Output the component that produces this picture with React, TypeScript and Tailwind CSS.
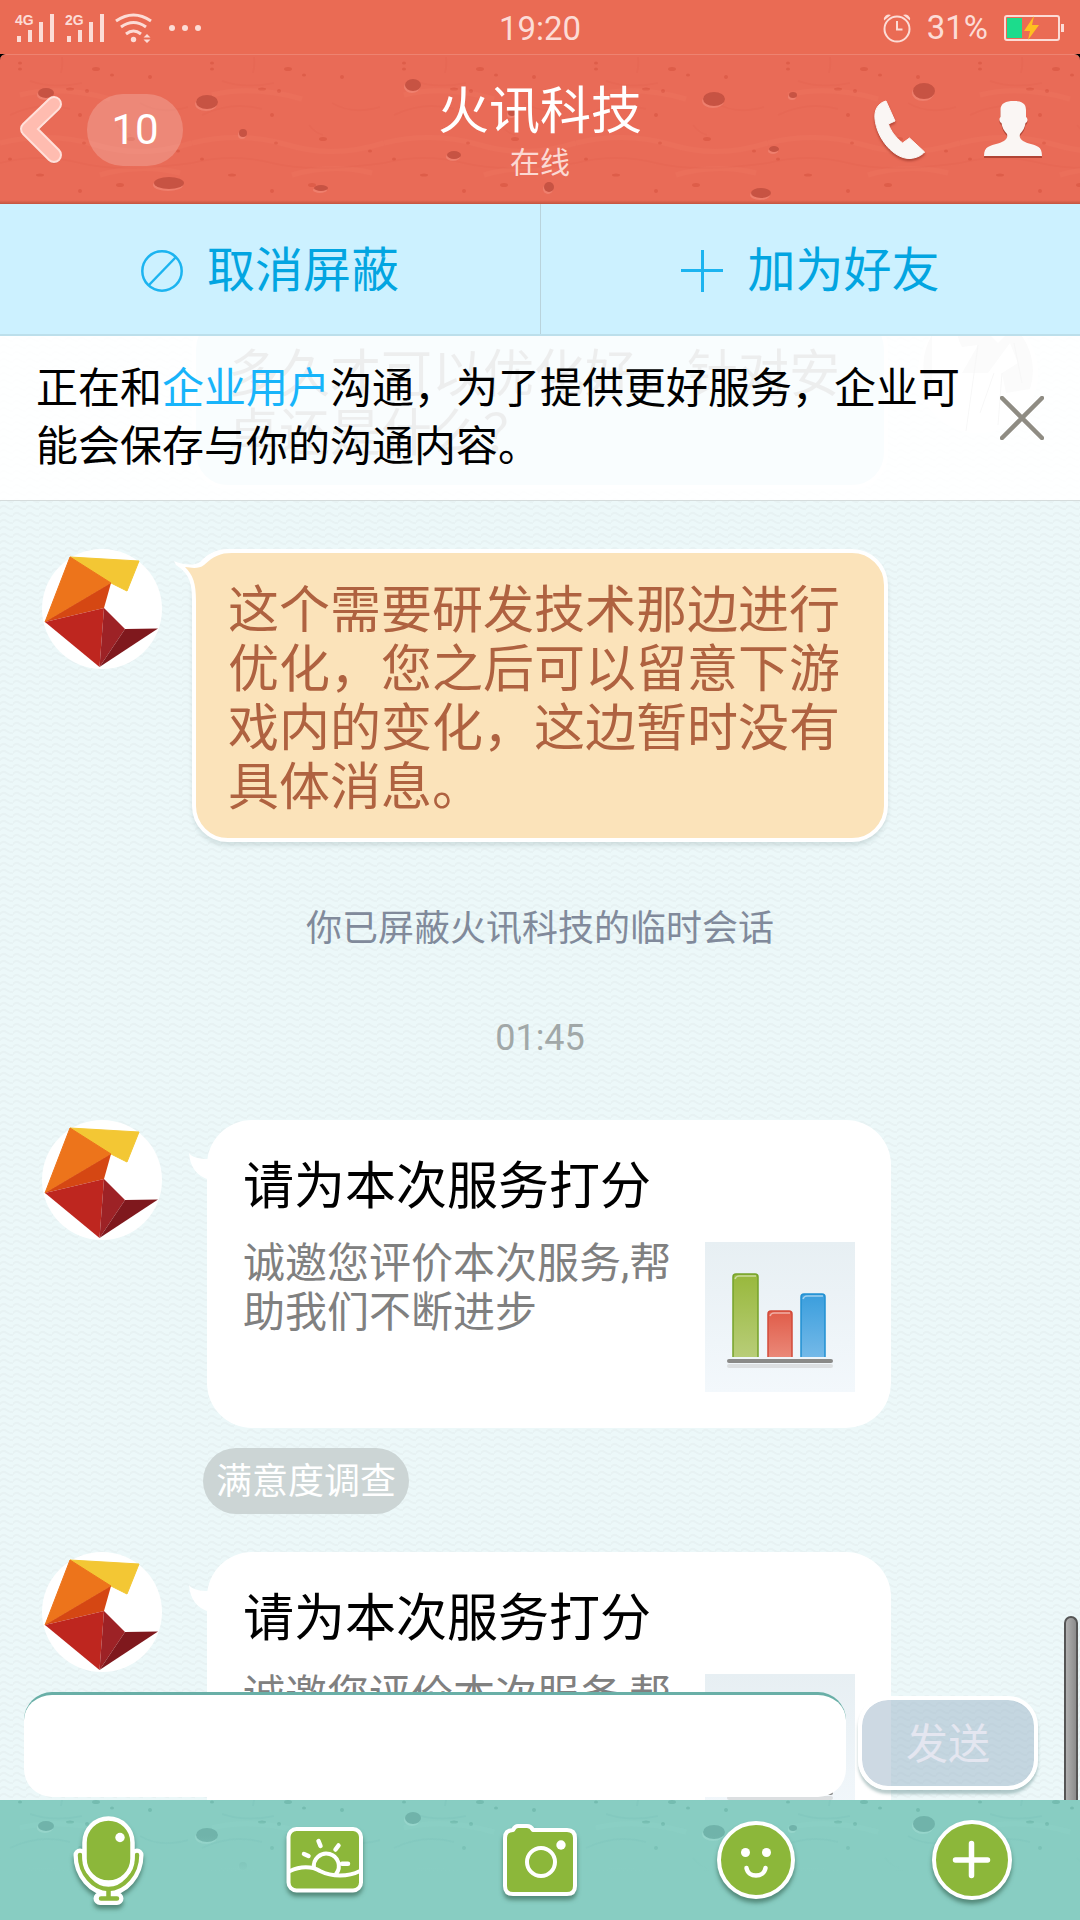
import { useId } from 'react';

const cracks = [
  [20, 14], [96, 14], [112, 20], [87, 36], [70, 34], [80, 60], [20, 8], [131, 84], [84, 88], [150, 22], [40, 120], [80, 136], [178, 96], [120, 130], [10, 104],
];

const spots = [
  { x: 46, y: 38, rx: 8, ry: 5 },
  { x: 207, y: 47, rx: 11, ry: 7 },
  { x: 243, y: 78, rx: 4, ry: 4 },
  { x: 169, y: 128, rx: 15, ry: 6 },
  { x: 413, y: 30, rx: 8, ry: 6 },
  { x: 454, y: 100, rx: 7, ry: 4 },
  { x: 321, y: 133, rx: 7, ry: 3 },
  { x: 512, y: 58, rx: 4, ry: 3 },
  { x: 549, y: 132, rx: 5, ry: 5 },
  { x: 714, y: 44, rx: 11, ry: 7 },
  { x: 793, y: 40, rx: 4, ry: 3 },
  { x: 774, y: 94, rx: 5, ry: 3 },
  { x: 761, y: 138, rx: 10, ry: 5 },
  { x: 924, y: 36, rx: 11, ry: 8 },
];

function Texture({ viewBox, spot, speck, glow }: { viewBox: string; spot: string; speck: string; glow: string }) {
  const id = useId();
  return (
    <svg viewBox={viewBox} preserveAspectRatio="xMidYMin slice" className="absolute inset-0 w-full h-full" aria-hidden="true">
      <defs>
        <pattern id={id} width="192" height="150" patternUnits="userSpaceOnUse">
          {cracks.map(([x, y], i) => (
            <ellipse key={i} cx={x} cy={y} rx={i % 3 === 1 ? 4 : 2} ry={i % 2 ? 2 : 1.5} fill={speck} opacity="0.35" />
          ))}
          <path d="M62 2q1 8-1 16M117 70q6 8 14 10M0 108q40-10 80 0t112 0M140 48q20 12 48 4M10 60q30-14 60-6M30 26q24 8 52 2" fill="none" stroke={speck} strokeWidth="2" opacity="0.08" />
          <path d="M0 88q50-12 96 2t96-2M20 40q40-10 90 4M100 120q40-12 80-2" fill="none" stroke={glow} strokeWidth="5" opacity="0.08" />
        </pattern>
      </defs>
      <rect width="1080" height="150" fill={`url(#${id})`} />
      {spots.map(({ x, y, rx, ry }) => (
        <g key={`${x}-${y}`}>
          <ellipse cx={x - 1} cy={y + 2} rx={rx} ry={ry} fill={glow} opacity="0.5" />
          <ellipse cx={x} cy={y} rx={rx} ry={ry} fill={spot} />
        </g>
      ))}
    </svg>
  );
}

function Weave() {
  return (
    <svg className="absolute inset-0 w-full h-full" aria-hidden="true">
      <defs>
        <pattern id="weave" width="13" height="7" patternUnits="userSpaceOnUse">
          <path d="M-1 5Q3 0 6.500 3T14 5" fill="none" stroke="#e7f2f3" strokeWidth="2" />
        </pattern>
      </defs>
      <rect width="100%" height="100%" fill="url(#weave)" />
    </svg>
  );
}

function StatusBar() {
  return (
    <div className="grid grid-cols-3 items-center h-[54px] bg-[#ea6b54] text-[#fcdcd6] text-[33px] leading-[54px]">
      <svg width="210" height="54" viewBox="0 0 210 54" fill="currentColor" role="img" aria-label="4G 2G Wi-Fi">
        <text x="15" y="24" fontSize="14" fontWeight="700" fontFamily="Liberation Sans, sans-serif">4G</text>
        <path d="M17 35h4v6h-4zM28 29h4v12h-4zM39 21h4v20h-4zM50 13h4v28h-4z" />
        <text x="65" y="24" fontSize="14" fontWeight="700" fontFamily="Liberation Sans, sans-serif">2G</text>
        <path d="M67 35h4v6h-4zM78 29h4v12h-4zM89 21h4v20h-4zM100 13h4v28h-4z" />
        <path d="M116 20q17.500-12 35 0M121 26q12.500-9 25 0M126 33q7.500-6 15 0" fill="none" stroke="currentColor" strokeWidth="3" />
        <circle cx="133.500" cy="38.500" r="2.700" />
        <path d="M143.500 36.500l3.500-3.500 3.500 3.500zM143.500 38.500l3.500 3.500 3.500-3.500z" />
        <circle cx="172" cy="27" r="3" />
        <circle cx="185" cy="27" r="3" />
        <circle cx="198" cy="27" r="3" />
      </svg>
      <time className="text-center pt-0.5">19:20</time>
      <div className="flex items-center justify-end gap-4 pr-[15px]">
        <svg width="28" height="30" viewBox="0 0 28 30" fill="none" stroke="currentColor" strokeWidth="2" aria-hidden="true">
          <circle cx="14" cy="16" r="12.500" />
          <path d="M14 8v8.500h5.500" />
          <path d="M1 7.500a5 5 0 0 1 7-5.500zM27 7.500a5 5 0 0 0-7-5.500z" fill="currentColor" stroke="none" />
        </svg>
        <span>31%</span>
        <svg width="61" height="28" viewBox="0 0 61 28" role="img" aria-label="31%">
          <rect x="1" y="2" width="54" height="24" rx="2" fill="none" stroke="currentColor" strokeWidth="2" />
          <rect x="3" y="4" width="15" height="20" fill="#1cdc8c" />
          <path d="M57 10h3v8h-3z" fill="currentColor" />
          <path d="M30 2L20 17h6l-2 9 11-15h-7z" fill="#ffc020" />
        </svg>
      </div>
    </div>
  );
}

function Header() {
  return (
    <div className="bg-black">
      <header className="relative grid grid-cols-[1fr_auto_1fr] items-center h-[150px] rounded-t-md overflow-hidden bg-[#e96b57] border-t border-[#ee8371]">
        <Texture viewBox="0 0 1080 150" spot="#c75343" speck="#c8432f" glow="#f59483" />
        <div className="absolute inset-x-0 bottom-0 h-1 bg-linear-to-b from-transparent to-[#c2543f]" />
        <div className="relative flex items-center gap-5 pl-3">
          <button type="button" aria-label="返回">
            <svg width="55" height="80" viewBox="0 0 55 80" fill="none" strokeLinecap="round" strokeLinejoin="round">
              <path d="M42 15L16 40l26 26" stroke="#b04a3c" strokeWidth="15" opacity="0.4" />
              <path d="M42 14L16 39l26 26" stroke="#ffe0da" strokeWidth="16" />
              <path d="M42 14L16 39l26 26" stroke="#ffbcb0" strokeWidth="12" />
            </svg>
          </button>
          <span className="flex items-center justify-center w-24 h-[72px] rounded-full bg-white/20 text-[42px] text-white">10</span>
        </div>
        <div className="relative text-center pt-1.5">
          <h1 className="text-[51px] leading-[60px] text-white">火讯科技</h1>
          <p className="text-[30px] leading-[42px] text-[#fbd9d3]">在线</p>
        </div>
        <div className="relative flex items-center justify-end gap-12 pr-8">
          <button type="button" aria-label="语音通话">
            <svg width="60" height="72" viewBox="0 0 60 72" className="drop-shadow-[0_2px_1px_rgba(120,30,20,0.5)]">
              <path d="M16 7C8 9 4 16 5 25C7 45 24 65 40 64.500C47 64 52 61 54.600 58L39.500 44L32.600 49C26 44 20 36 18.500 30L25 27Z" fill="#faf6f4" stroke="#faf6f4" strokeLinejoin="round" />
            </svg>
          </button>
          <button type="button" aria-label="联系人资料">
            <svg width="70" height="72" viewBox="0 0 70 72" className="drop-shadow-[0_2px_0_rgba(120,30,20,0.5)]">
              <path d="M6 62C6 52 12 52 20 49.500C28 47 30 44 29 40C26 37 24 33 23.500 29C21 28 21 24 22.500 23V16C22.500 9 28 7 35.500 7S48 9 48 16V23C50 24 50 28 47.500 29C47 33 45 37 42 40C41 44 43 47 51 49.500C59 52 64 52 64 62Z" fill="#faf6f4" />
            </svg>
          </button>
        </div>
      </header>
    </div>
  );
}

function Actions() {
  return (
    <div className="grid grid-cols-2 h-[132px] bg-[#ccf1ff] border-b-2 border-[#bcdfeb] text-[48px] text-[#02a5e1]">
      <button type="button" className="flex items-center justify-center gap-6 pt-1">
        <svg width="42" height="42" viewBox="0 0 42 42" fill="none" stroke="#1cb4f0" strokeWidth="2.500" aria-hidden="true">
          <circle cx="21" cy="21" r="19.700" />
          <path d="M8 35L35 7" />
        </svg>
        取消屏蔽
      </button>
      <button type="button" className="flex items-center justify-center gap-6 pt-1 border-l border-[#b9d3dc]">
        <svg width="42" height="42" viewBox="0 0 42 42" stroke="#1cb4f0" strokeWidth="3" aria-hidden="true">
          <path d="M0 20.500h42M21.500 0v42" />
        </svg>
        加为好友
      </button>
    </div>
  );
}

function Notice() {
  return (
    <div className="absolute inset-x-0 top-0 z-10 flex items-center justify-between px-9 py-6 bg-white/92 border-b border-[#d5dcdc]">
      <p className="w-[936px] text-[42px] leading-[58px] text-black">
        正在和<a href="#enterprise" className="text-[#18b4fa]">企业用户</a>沟通，为了提供更好服务，企业可能会保存与你的沟通内容。
      </p>
      <button type="button" aria-label="关闭" className="shrink-0">
        <svg width="44" height="44" viewBox="0 0 44 44" fill="none" stroke="#8f8c83" strokeWidth="4.500" strokeLinecap="round">
          <path d="M2 2l40 40M42 2L2 42" />
        </svg>
      </button>
    </div>
  );
}

function Avatar() {
  return (
    <svg viewBox="0 0 120 120" className="w-[120px] h-[120px] shrink-0" role="img" aria-label="火讯科技">
      <circle cx="60" cy="60" r="60" fill="#fff" />
      <path d="M28 8L97 12L85 42L69 34Z" fill="#f3c734" stroke="#f3c734" strokeLinejoin="round" />
      <path d="M28 8L69 34L3 73Z" fill="#ed741b" stroke="#ed741b" strokeLinejoin="round" />
      <path d="M69 34L3 73L62 59Z" fill="#d54713" />
      <path d="M3 73L62 59L57.500 118Z" fill="#be261f" />
      <path d="M62 59L83 80L57.500 118Z" fill="#9d2226" />
      <path d="M83 80L116 79.500L57.500 118Z" fill="#7f181d" />
    </svg>
  );
}

function SurveyChart() {
  return (
    <svg viewBox="0 0 150 150" className="w-[150px] h-[150px] shrink-0" role="img" aria-label="满意度调查">
      <defs>
        <linearGradient id="tile" x2="0" y2="1"><stop stopColor="#e7eff3" /><stop offset="1" stopColor="#f3f8fc" /></linearGradient>
        <linearGradient id="green" x2="0" y2="1"><stop stopColor="#98b83c" /><stop offset="1" stopColor="#b8cd78" /></linearGradient>
        <linearGradient id="red" x2="0" y2="1"><stop stopColor="#e05c49" /><stop offset="1" stopColor="#ea8878" /></linearGradient>
        <linearGradient id="blue" x2="0" y2="1"><stop stopColor="#3a9edd" /><stop offset="1" stopColor="#74b9e8" /></linearGradient>
      </defs>
      <rect width="150" height="150" fill="url(#tile)" />
      <path d="M28 115V35q0-3 3-3h19q3 0 3 3v80" fill="url(#green)" stroke="#76a22a" strokeWidth="1.500" />
      <path d="M63 115V72q0-3 3-3h18q3 0 3 3v43" fill="url(#red)" stroke="#d24b3a" strokeWidth="1.500" />
      <path d="M96 115V55q0-3 3-3h18q3 0 3 3v60" fill="url(#blue)" stroke="#2190d2" strokeWidth="1.500" />
      <path d="M30 37q1-3 4-3h17M65 74q1-3 4-3h16M98 57q1-3 4-3h16" fill="none" stroke="#fff" strokeWidth="1.500" opacity="0.5" />
      <rect x="22" y="117" width="106" height="4" rx="2" fill="#8a8a88" />
      <rect x="22" y="122" width="106" height="4" rx="2" fill="#dcdfe1" />
    </svg>
  );
}

function SurveyCard() {
  return (
    <div className="relative flex-1 max-w-[684px] ml-[45px] px-9 h-[308px] rounded-[45px] bg-white">
      <svg width="22" height="30" viewBox="0 0 22 30" className="absolute -left-[19px] top-8" aria-hidden="true">
        <path d="M1 1C4 5 10 7 22 7V28C8 24 2 14 1 1Z" fill="#fff" />
      </svg>
      <h2 className="pt-[37px] text-[51px] leading-[60px] text-black">请为本次服务打分</h2>
      <div className="flex justify-between gap-3 pt-[25px]">
        <p className="-mt-[3px] text-[42px] leading-[49px] text-[#808080]">诚邀您评价本次服务,帮助我们不断进步</p>
        <SurveyChart />
      </div>
    </div>
  );
}

function Messages() {
  return (
    <ol className="relative -mt-[23px]">
      <li className="flex items-start justify-end mb-15 pr-[42px]">
        <div className="w-[696px] mr-[30px] px-8 pt-7 pb-[22px] rounded-[36px] border-4 border-white bg-[#b4dcea] text-[51px] leading-[59px] text-[#1b2a30]">
          多久才可以优化好，针对安卓还是什么？
        </div>
        <svg viewBox="0 0 120 120" className="w-[120px] h-[120px]" role="img" aria-label="我">
          <circle cx="60" cy="60" r="60" fill="#fff" />
          <path d="M14 22A60 60 0 0 0 14 84V22ZM40 2Q36 20 44 34L60 32 44 60H70L92 30 100 50 84 60 88 80 112 76A60 60 0 0 0 96 14L80 30 60 10Z" fill="#c4c4c4" />
          <path d="M60 32L48 118M76 60L62 100M84 60L80 112M96 30L104 70" fill="none" stroke="#999" />
        </svg>
      </li>
      <li className="flex items-start mb-15 pl-[42px]">
        <Avatar />
        <div className="relative w-[696px] ml-[30px] px-8 pt-7 pb-[21px] rounded-[36px] border-4 border-white bg-[#fbe3ba] shadow-[0_4px_4px_rgba(60,90,90,0.14)] text-[51px] leading-[59px] text-[#af6240]">
          <svg width="62" height="54" viewBox="0 0 62 54" className="absolute -left-6 -top-1" aria-hidden="true">
            <path d="M2 12C10 16 22 17 28 13C38 4 44 0 60 0V10L30 50H20C20 32 16 24 4 16Z" fill="#fff" />
            <path d="M13 18C20 19 27 20 32 16C42 7 48 4 60 4V52H24C24 34 21 26 13 18Z" fill="#fbe3ba" />
          </svg>
          <p className="relative">这个需要研发技术那边进行优化，您之后可以留意下游戏内的变化，这边暂时没有具体消息。</p>
        </div>
      </li>
      <li className="mb-15 text-center text-[36px] leading-[54px] text-[#818a9b]">你已屏蔽火讯科技的临时会话</li>
      <li className="mb-15 text-center text-[36px] leading-[44px] text-[#a1a8a8]"><time>01:45</time></li>
      <li className="mb-[38px]">
        <div className="flex items-start pl-[42px]">
          <Avatar />
          <SurveyCard />
        </div>
        <a href="#survey" className="flex items-center w-fit h-[66px] mt-5 ml-[203px] px-[13px] pt-0.5 rounded-full bg-[#ccd5d5] text-[36px] text-white">满意度调查</a>
      </li>
      <li className="flex items-start pl-[42px]">
        <Avatar />
        <SurveyCard />
      </li>
    </ol>
  );
}

function Composer() {
  return (
    <form className="absolute inset-x-0 bottom-0 z-10 flex items-start gap-3 pl-6 pr-[42px] pb-[3px]" onSubmit={(e) => e.preventDefault()}>
      <input type="text" aria-label="输入消息" className="flex-1 min-w-0 h-[105px] px-6 rounded-[28px] border-t-3 border-[#69afa7] bg-white text-[42px] outline-none" />
      <button type="submit" className="w-[180px] h-[94px] mt-1 pt-0.5 rounded-[30px] border-4 border-white bg-[#9bb3c8]/50 bg-clip-padding shadow-[0_4px_3px_rgba(60,110,110,0.35)] text-[42px] text-[#e4e6f0]">发送</button>
    </form>
  );
}

const tools = [
  {
    label: '语音',
    icon: (
      <>
        <path d="M26 55C26 74 40 89 54.500 89S83 74 83 55M54.500 89v9M46 98.500h17" stroke="#fff" strokeWidth="13" />
        <path d="M26 55C26 74 40 89 54.500 89S83 74 83 55M54.500 89v9M47 98.500h16" stroke="#8cb73a" strokeWidth="4.500" />
        <rect x="30.500" y="18.500" width="48" height="64" rx="24" fill="#8cb73a" stroke="#fff" strokeWidth="4.500" />
        <circle cx="66" cy="37.500" r="4.700" fill="#fff" />
      </>
    ),
  },
  {
    label: '图片',
    icon: (
      <>
        <rect x="18.500" y="29" width="72.500" height="61.500" rx="8" fill="#8cb73a" stroke="#fff" strokeWidth="4" />
        <path d="M20 71C30 66 42 66 50 71C62 77 78 77 90 71M44 68A12.500 12.500 0 1 1 66 74" stroke="#fff" strokeWidth="4" />
        <path d="M48.500 41l2 5M68.500 45.500l-3 4M34 54l4.500 2M72 63.700h6" stroke="#fff" strokeWidth="4.500" />
      </>
    ),
  },
  {
    label: '拍照',
    icon: (
      <>
        <path d="M27 30q2-4 5-4h9q4 0 6 4h34q8 0 8 8v48q0 8-8 8H27q-8 0-8-8V38q0-8 8-8z" fill="#8cb73a" stroke="#fff" strokeWidth="4" />
        <circle cx="55" cy="62" r="14" stroke="#fff" strokeWidth="4" />
        <circle cx="75" cy="45" r="4.700" fill="#fff" />
      </>
    ),
  },
  {
    label: '表情',
    icon: (
      <>
        <circle cx="54" cy="60" r="37" fill="#8cb73a" stroke="#fff" strokeWidth="4" />
        <circle cx="43.500" cy="52.500" r="4.500" fill="#fff" />
        <circle cx="64.500" cy="52.500" r="4.500" fill="#fff" />
        <path d="M44.500 68C46 78 62 78 63.500 68" stroke="#fff" strokeWidth="4.500" />
      </>
    ),
  },
  {
    label: '更多',
    icon: (
      <>
        <circle cx="54" cy="60" r="38" fill="#8cb73a" stroke="#fff" strokeWidth="4" />
        <path d="M37.500 60h32M53.500 43.500v32" stroke="#fff" strokeWidth="5.500" />
      </>
    ),
  },
];

function Toolbar() {
  return (
    <nav className="relative grid grid-cols-5 h-[120px] overflow-hidden bg-[#88cdc2]">
      <Texture viewBox="0 12 1080 120" spot="#70b3aa" speck="#4f9c90" glow="#a4ddd4" />
      <div className="absolute inset-0 bg-linear-to-b from-[#88cdc2]/0 from-30% to-[#88cdc2] to-60%" />
      {tools.map(({ label, icon }) => (
        <button key={label} type="button" aria-label={label} className="relative flex justify-center">
          <svg width="108" height="120" viewBox="0 0 108 120" fill="none" strokeLinecap="round" strokeLinejoin="round" className="drop-shadow-[0_4px_2px_rgba(30,70,50,0.5)]">
            {icon}
          </svg>
        </button>
      ))}
    </nav>
  );
}

export default function App() {
  return (
    <div className="flex flex-col h-screen overflow-hidden font-['Roboto','Noto_Sans_CJK_SC',sans-serif]" lang="zh-CN">
      <StatusBar />
      <Header />
      <Actions />
      <main className="relative flex-1 min-h-0 overflow-hidden bg-[#ecf8f9]">
        <Weave />
        <Notice />
        <Messages />
        <div className="absolute right-0.5 bottom-0 w-3.5 h-[184px] rounded-t-full border-2 border-b-0 border-[#555] bg-linear-to-r from-[#b0b0b0] to-[#8c8c8c]" />
        <Composer />
      </main>
      <Toolbar />
    </div>
  );
}
